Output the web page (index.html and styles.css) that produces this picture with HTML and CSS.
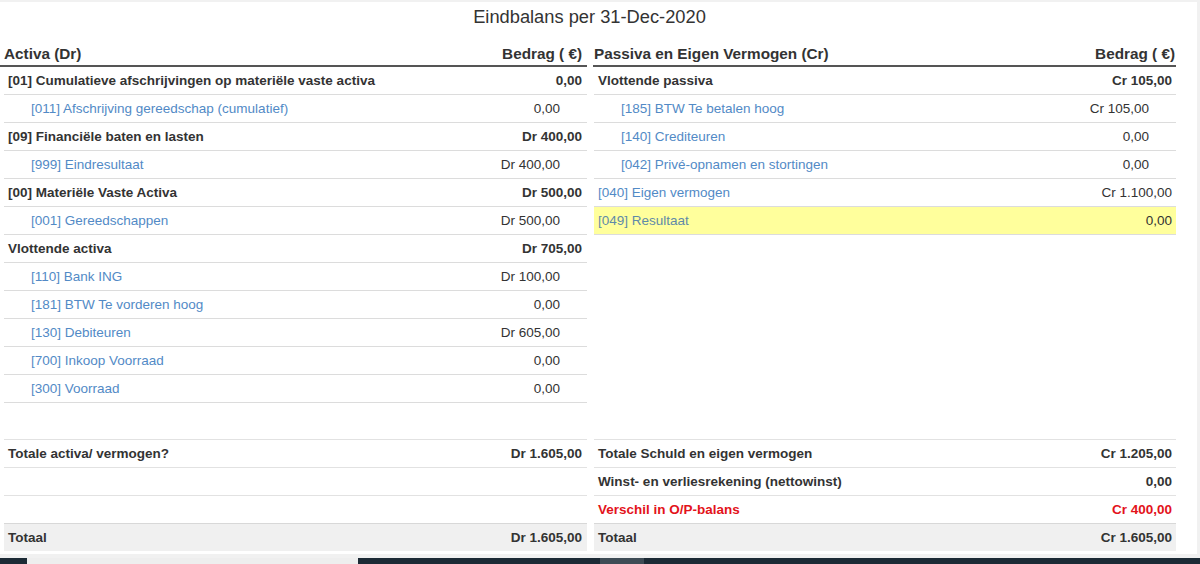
FILE: index.html
```html
<!DOCTYPE html>
<html lang="nl">
<head>
<meta charset="utf-8">
<title>Eindbalans</title>
<link rel="stylesheet" href="styles.css">
</head>
<body>
<div class="page">
  <h3 class="title">Eindbalans per 31-Dec-2020</h3>
  <div class="columns">
    <div class="col col-left">
      <div class="thead"><span>Activa (Dr)</span><span>Bedrag ( €)</span></div>
      <div class="row group"><span>[01] Cumulatieve afschrijvingen op materiële vaste activa</span><span class="amt">0,00</span></div>
      <div class="row child"><a class="acc">[011] Afschrijving gereedschap (cumulatief)</a><span class="amt">0,00</span></div>
      <div class="row group"><span>[09] Financiële baten en lasten</span><span class="amt">Dr 400,00</span></div>
      <div class="row child"><a class="acc">[999] Eindresultaat</a><span class="amt">Dr 400,00</span></div>
      <div class="row group"><span>[00] Materiële Vaste Activa</span><span class="amt">Dr 500,00</span></div>
      <div class="row child"><a class="acc">[001] Gereedschappen</a><span class="amt">Dr 500,00</span></div>
      <div class="row group"><span>Vlottende activa</span><span class="amt">Dr 705,00</span></div>
      <div class="row child"><a class="acc">[110] Bank ING</a><span class="amt">Dr 100,00</span></div>
      <div class="row child"><a class="acc">[181] BTW Te vorderen hoog</a><span class="amt">0,00</span></div>
      <div class="row child"><a class="acc">[130] Debiteuren</a><span class="amt">Dr 605,00</span></div>
      <div class="row child"><a class="acc">[700] Inkoop Voorraad</a><span class="amt">0,00</span></div>
      <div class="row child"><a class="acc">[300] Voorraad</a><span class="amt">0,00</span></div>
    </div>
    <div class="col col-right">
      <div class="thead"><span>Passiva en Eigen Vermogen (Cr)</span><span>Bedrag ( €)</span></div>
      <div class="row group"><span>Vlottende passiva</span><span class="amt">Cr 105,00</span></div>
      <div class="row child"><a class="acc">[185] BTW Te betalen hoog</a><span class="amt">Cr 105,00</span></div>
      <div class="row child"><a class="acc">[140] Crediteuren</a><span class="amt">0,00</span></div>
      <div class="row child"><a class="acc">[042] Privé-opnamen en stortingen</a><span class="amt">0,00</span></div>
      <div class="row"><a class="acc">[040] Eigen vermogen</a><span class="amt">Cr 1.100,00</span></div>
      <div class="row highlight"><a class="acc">[049] Resultaat</a><span class="amt">0,00</span></div>
    </div>
  </div>
  <div class="columns totals">
    <div class="col col-left">
      <div class="trow"><span>Totale activa/ vermogen?</span><span>Dr 1.605,00</span></div>
      <div class="trow"></div>
      <div class="trow"></div>
      <div class="trow total"><span>Totaal</span><span>Dr 1.605,00</span></div>
    </div>
    <div class="col col-right">
      <div class="trow"><span>Totale Schuld en eigen vermogen</span><span>Cr 1.205,00</span></div>
      <div class="trow"><span>Winst- en verliesrekening (nettowinst)</span><span>0,00</span></div>
      <div class="trow warn"><span>Verschil in O/P-balans</span><span>Cr 400,00</span></div>
      <div class="trow total"><span>Totaal</span><span>Cr 1.605,00</span></div>
    </div>
  </div>
</div>
<div class="taskbar">
  <div class="tb-light"></div>
  <div class="tb-mid"></div>
</div>
</body>
</html>
```

FILE: styles.css
```css
html, body {
  margin: 0;
  padding: 0;
}
body {
  background: #f1f1f1;
  font-family: "Liberation Sans", Arial, sans-serif;
  color: #333;
  font-size: 13.5px;
  width: 1200px;
  height: 564px;
  overflow: hidden;
}
.page {
  background: #fff;
  margin: 2px 3px 0 0;
  height: 552px;
  box-sizing: border-box;
}
.title {
  margin: 0 0 8px 0;
  height: 30px;
  line-height: 30px;
  text-align: center;
  font-size: 18.3px;
  font-weight: normal;
  color: #333;
  padding-right: 18px;
}
.columns {
  display: grid;
  grid-template-columns: 587px 583px;
  column-gap: 6px;
}
.thead {
  display: flex;
  justify-content: space-between;
  align-items: center;
  box-sizing: border-box;
  height: 27px;
  padding-top: 2px;
  border-bottom: 2px solid #555;
  font-weight: bold;
  font-size: 15.3px;
  color: #333;
}
.col-left .thead { padding-left: 4px; padding-right: 5px; }
.col-right .thead { padding-left: 1px; padding-right: 1px; }
.row, .trow {
  display: flex;
  justify-content: space-between;
  align-items: center;
  box-sizing: border-box;
  height: 28px;
  padding: 0 5px 0 4px;
}
.row { border-bottom: 1px solid #dcdcdc; }
.col-left .row, .col-left .trow { margin-left: 4px; }
.col-right .row, .col-right .trow { margin-left: 1px; padding-right: 4px; }
.group { font-weight: bold; }
.child { padding-left: 27px; }
.col-left .child, .col-right .child { padding-right: 27px; }
.acc {
  color: #528ac6;
  text-decoration: none;
  cursor: pointer;
}
.highlight { background: #ffff9c; }
.highlight .acc { color: #5f8aa8; }
.amt { white-space: nowrap; }
.totals { margin-top: 36px; }
.trow {
  border-top: 1px solid #e2e2e2;
  font-weight: bold;
}
.trow.total {
  background: #f0f0f0;
  border-top-color: #d8d8d8;
}
.trow.warn { color: #e3131b; }
.taskbar {
  margin-top: 4px;
  height: 6px;
  background: #1c2a35;
  display: flex;
}
.tb-light {
  margin-left: 27px;
  width: 331px;
  background: #eeeeee;
}
.tb-mid {
  margin-left: 242px;
  width: 44px;
  background: #3e4b55;
}
```
